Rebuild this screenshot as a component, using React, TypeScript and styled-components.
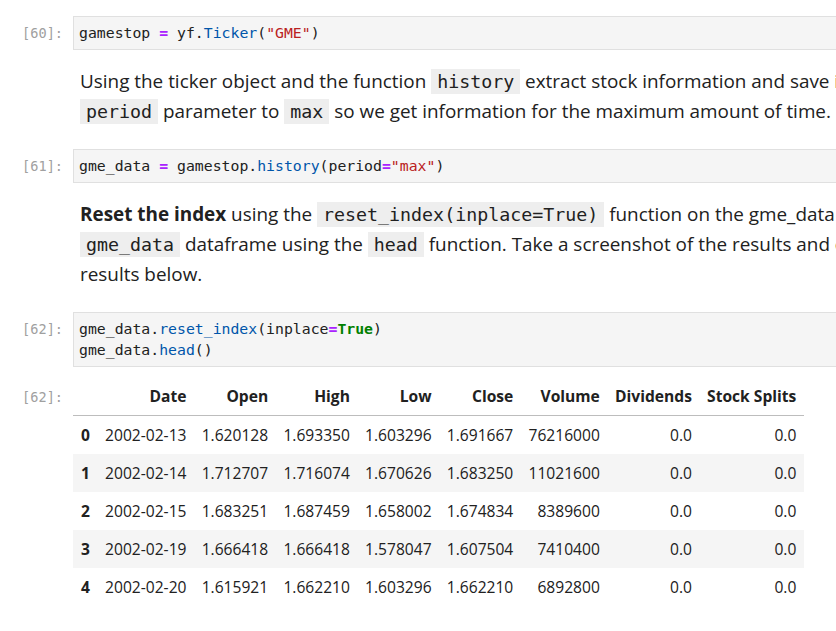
import React from "react";
import styled, { createGlobalStyle } from "styled-components";

const Global = createGlobalStyle`
  html, body {
    margin: 0;
    padding: 0;
    background: #ffffff;
    overflow: hidden;
  }
`;

const MONO = `"DejaVu Sans Mono", "Liberation Mono", monospace`;
const SANS = `"Open Sans", "Noto Sans", sans-serif`;

const Notebook = styled.div`
  width: 1100px;
  padding-top: 16px;
  display: flex;
  flex-direction: column;
  color: #212121;
`;

const Cell = styled.div<{ $mt?: number }>`
  display: flex;
  align-items: flex-start;
  margin-top: ${(p) => p.$mt ?? 0}px;
`;

const Prompt = styled.div<{ $pt?: number }>`
  flex: 0 0 73px;
  box-sizing: border-box;
  padding-right: 10px;
  padding-top: ${(p) => p.$pt ?? 7}px;
  text-align: right;
  font-family: ${MONO};
  font-size: 13.6px;
  line-height: 21px;
  color: #a0a0a0;
`;

const InputBox = styled.div`
  flex: 1;
  background: #f5f5f5;
  border: 1px solid #e0e0e0;
  padding: 5px 5px 6px 5px;
`;

const Code = styled.pre`
  margin: 0;
  font-family: ${MONO};
  font-size: 14.8px;
  line-height: 21px;
  color: #212121;
`;

const Op = styled.span`
  color: #aa22ff;
  font-weight: bold;
`;
const Prop = styled.span`
  color: #0055aa;
`;
const Str = styled.span`
  color: #ba2121;
`;
const Kw = styled.span`
  color: #008000;
  font-weight: bold;
`;

const Markdown = styled.div`
  flex: 1;
  padding-left: 7px;
  font-family: ${SANS};
  font-size: 18.9px;
  line-height: 30px;
  color: #212121;
  white-space: nowrap;
`;

const Para = styled.p`
  margin: 0;
`;

const InlineCode = styled.code`
  font-family: ${MONO};
  font-size: 18.3px;
  line-height: 1;
  background: #eeeeee;
  padding: 2px 6px;
  color: #212121;
`;

const Output = styled.div`
  flex: 1;
`;

const Table = styled.table`
  border-collapse: collapse;
  border: none;
  font-family: ${SANS};
  font-size: 15.6px;
  color: #212121;
`;

const Th = styled.th`
  text-align: right;
  font-weight: bold;
  padding: 8px 7.6px;
  line-height: 21px;
  border-bottom: 1px solid #bdbdbd;
  white-space: nowrap;
`;

const Row = styled.tr`
  &:nth-child(even) {
    background: #f5f5f5;
  }
`;

const IndexCell = styled.th`
  text-align: right;
  font-weight: bold;
  padding: 8px 7.6px 8px 8px;
  line-height: 22px;
`;

const Td = styled.td`
  text-align: right;
  padding: 8px 7.6px;
  line-height: 22px;
  white-space: nowrap;
`;

const headers = ["Date", "Open", "High", "Low", "Close", "Volume", "Dividends", "Stock Splits"];

const rows = [
  ["2002-02-13", "1.620128", "1.693350", "1.603296", "1.691667", "76216000", "0.0", "0.0"],
  ["2002-02-14", "1.712707", "1.716074", "1.670626", "1.683250", "11021600", "0.0", "0.0"],
  ["2002-02-15", "1.683251", "1.687459", "1.658002", "1.674834", "8389600", "0.0", "0.0"],
  ["2002-02-19", "1.666418", "1.666418", "1.578047", "1.607504", "7410400", "0.0", "0.0"],
  ["2002-02-20", "1.615921", "1.662210", "1.603296", "1.662210", "6892800", "0.0", "0.0"],
];

export default function App() {
  return (
    <>
      <Global />
      <Notebook>
        <Cell>
          <Prompt>[60]:</Prompt>
          <InputBox>
            <Code>
              gamestop <Op>=</Op> yf.<Prop>Ticker</Prop>(<Str>"GME"</Str>)
            </Code>
          </InputBox>
        </Cell>

        <Cell $mt={16}>
          <Prompt />
          <Markdown>
            <Para>
              Using the ticker object and the function <InlineCode>history</InlineCode> extract stock
              information and save it in a dataframe named gme_data. Set the
              <br />
              <InlineCode>period</InlineCode> parameter to <InlineCode>max</InlineCode> so we get
              information for the maximum amount of time.
            </Para>
          </Markdown>
        </Cell>

        <Cell $mt={23}>
          <Prompt>[61]:</Prompt>
          <InputBox>
            <Code>
              gme_data <Op>=</Op> gamestop.<Prop>history</Prop>(period<Op>=</Op>
              <Str>"max"</Str>)
            </Code>
          </InputBox>
        </Cell>

        <Cell $mt={16}>
          <Prompt />
          <Markdown>
            <Para>
              <b>Reset the index</b> using the <InlineCode>reset_index(inplace=True)</InlineCode>{" "}
              function on the gme_data DataFrame and display the first five rows of the
              <br />
              <InlineCode>gme_data</InlineCode> dataframe using the <InlineCode>head</InlineCode>{" "}
              function. Take a screenshot of the results and code from the beginning of Question 1 to the
              <br />
              results below.
            </Para>
          </Markdown>
        </Cell>

        <Cell $mt={23}>
          <Prompt>[62]:</Prompt>
          <InputBox>
            <Code>
              gme_data.<Prop>reset_index</Prop>(inplace<Op>=</Op>
              <Kw>True</Kw>)
              {"\n"}gme_data.<Prop>head</Prop>()
            </Code>
          </InputBox>
        </Cell>

        <Cell $mt={11}>
          <Prompt $pt={9}>[62]:</Prompt>
          <Output>
            <Table>
              <thead>
                <tr>
                  <Th />
                  {headers.map((h) => (
                    <Th key={h}>{h}</Th>
                  ))}
                </tr>
              </thead>
              <tbody>
                {rows.map((r, i) => (
                  <Row key={i}>
                    <IndexCell>{i}</IndexCell>
                    {r.map((c, j) => (
                      <Td key={j}>{c}</Td>
                    ))}
                  </Row>
                ))}
              </tbody>
            </Table>
          </Output>
        </Cell>
      </Notebook>
    </>
  );
}
